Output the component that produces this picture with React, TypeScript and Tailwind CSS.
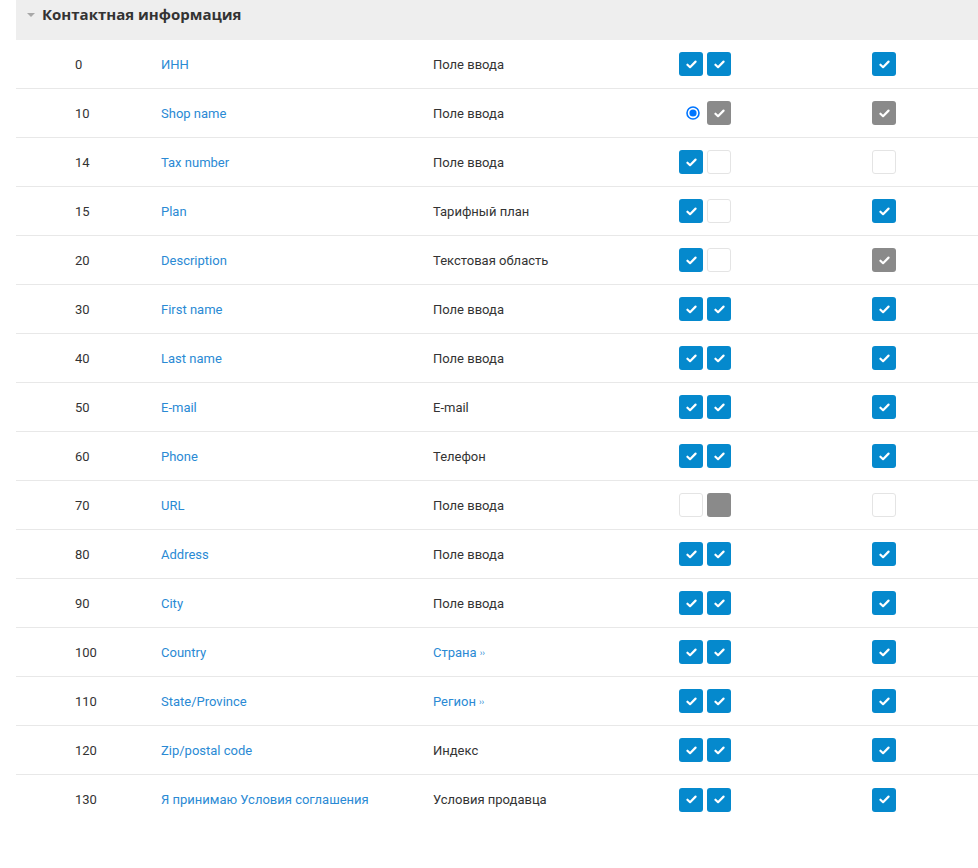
import React from 'react';

type Box = 'blue' | 'gray' | 'grayEmpty' | 'empty' | 'radio';

interface FieldRow {
  pos: number;
  name: string;
  type: string;
  typeLink?: boolean;
  pair: [Box, Box];
  single: Box;
}

const rows: FieldRow[] = [
  { pos: 0, name: 'ИНН', type: 'Поле ввода', pair: ['blue', 'blue'], single: 'blue' },
  { pos: 10, name: 'Shop name', type: 'Поле ввода', pair: ['radio', 'gray'], single: 'gray' },
  { pos: 14, name: 'Tax number', type: 'Поле ввода', pair: ['blue', 'empty'], single: 'empty' },
  { pos: 15, name: 'Plan', type: 'Тарифный план', pair: ['blue', 'empty'], single: 'blue' },
  { pos: 20, name: 'Description', type: 'Текстовая область', pair: ['blue', 'empty'], single: 'gray' },
  { pos: 30, name: 'First name', type: 'Поле ввода', pair: ['blue', 'blue'], single: 'blue' },
  { pos: 40, name: 'Last name', type: 'Поле ввода', pair: ['blue', 'blue'], single: 'blue' },
  { pos: 50, name: 'E-mail', type: 'E-mail', pair: ['blue', 'blue'], single: 'blue' },
  { pos: 60, name: 'Phone', type: 'Телефон', pair: ['blue', 'blue'], single: 'blue' },
  { pos: 70, name: 'URL', type: 'Поле ввода', pair: ['empty', 'grayEmpty'], single: 'empty' },
  { pos: 80, name: 'Address', type: 'Поле ввода', pair: ['blue', 'blue'], single: 'blue' },
  { pos: 90, name: 'City', type: 'Поле ввода', pair: ['blue', 'blue'], single: 'blue' },
  { pos: 100, name: 'Country', type: 'Страна', typeLink: true, pair: ['blue', 'blue'], single: 'blue' },
  { pos: 110, name: 'State/Province', type: 'Регион', typeLink: true, pair: ['blue', 'blue'], single: 'blue' },
  { pos: 120, name: 'Zip/postal code', type: 'Индекс', pair: ['blue', 'blue'], single: 'blue' },
  { pos: 130, name: 'Я принимаю Условия соглашения', type: 'Условия продавца', pair: ['blue', 'blue'], single: 'blue' },
];

function Check() {
  return (
    <svg viewBox="0 0 12 10" className="w-[11px] h-[9px]">
      <path
        d="M1.5 5.2 L4.4 8 L10.5 1.8"
        fill="none"
        stroke="white"
        strokeWidth={2.4}
        strokeLinecap="round"
        strokeLinejoin="round"
      />
    </svg>
  );
}

function CheckBox({ kind }: { kind: Box }) {
  if (kind === 'radio') {
    return (
      <span className="w-[24px] h-[24px] flex items-center justify-end pr-[3px]">
        <svg viewBox="0 0 14 14" className="w-[14px] h-[14px]">
          <circle cx="7" cy="7" r="6" fill="white" stroke="#0075ff" strokeWidth={1.6} />
          <circle cx="7" cy="7" r="3.6" fill="#0075ff" />
        </svg>
      </span>
    );
  }
  if (kind === 'empty') {
    return <span className="w-[24px] h-[24px] rounded-[3px] border border-[#e4e4e4] bg-white" />;
  }
  if (kind === 'grayEmpty') {
    return <span className="w-[24px] h-[24px] rounded-[3px] bg-[#8a8a8a]" />;
  }
  return (
    <span
      className={`w-[24px] h-[24px] rounded-[3px] flex items-center justify-center ${
        kind === 'blue' ? 'bg-[#0589cd]' : 'bg-[#8a8a8a]'
      }`}
    >
      <Check />
    </span>
  );
}

export default function App() {
  return (
    <div className="w-[978px] h-[868px] bg-white overflow-hidden font-['Roboto',sans-serif] text-[13px] text-[#333]">
      <div className="ml-[16px]">
        <div className="h-[40px] bg-[#eeeeee] flex items-start pt-[3px]">
          <span className="ml-[11px] mt-[10px] w-0 h-0 border-l-[4px] border-r-[4px] border-t-[4px] border-l-transparent border-r-transparent border-t-[#a8a8a8]" />
          <h2 className="ml-[7px] font-['Open_Sans',sans-serif] text-[15px] font-bold text-[#333] leading-[22px]">
            Контактная информация
          </h2>
        </div>

        {rows.map((row, i) => (
          <div
            key={row.pos}
            className={`flex items-center h-[49px] pt-[1px] ${
              i < rows.length - 1 ? 'border-b border-[#e8e8e8]' : ''
            }`}
          >
            <div className="w-[145px] pl-[59px]">{row.pos}</div>
            <div className="w-[272px] text-[#2a8ad4]">{row.name}</div>
            <div className={`w-[246px] ${row.typeLink ? 'text-[#2a8ad4]' : ''}`}>
              {row.type}
              {row.typeLink && <span className="text-[9px] ml-[3px] relative top-[-1px]">››</span>}
            </div>
            <div className="w-[193px] flex gap-[4px] -mt-[1px]">
              <CheckBox kind={row.pair[0]} />
              <CheckBox kind={row.pair[1]} />
            </div>
            <div className="flex -mt-[1px]">
              <CheckBox kind={row.single} />
            </div>
          </div>
        ))}
      </div>
    </div>
  );
}
